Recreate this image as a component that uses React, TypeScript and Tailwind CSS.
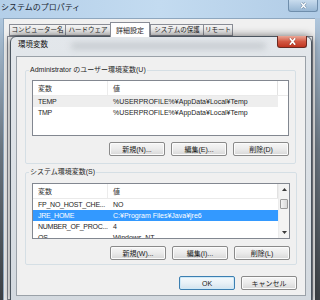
import React from "react";

function XIcon({ className }: { className?: string }) {
  return (
    <svg viewBox="0 0 10 8" className={className}>
      <path d="M2.5 1 L7.5 7 M7.5 1 L2.5 7" stroke="#4a2a24" strokeWidth="3" strokeLinecap="square" fill="none" opacity="0.35" />
      <path d="M2.5 1 L7.5 7 M7.5 1 L2.5 7" stroke="white" strokeWidth="1.8" strokeLinecap="square" fill="none" />
    </svg>
  );
}

function Btn({ label, def }: { label: string; def?: boolean }) {
  return (
    <div
      className={
        def
          ? "h-[14px] w-[56px] flex items-center justify-center rounded-[2px] border border-[#3c7fb1] bg-linear-to-b from-[#f4f9fc] via-[#e8f1f7] to-[#d3e3ee] shadow-[inset_0_0_0_1px_#cfe9f7] text-[7px] leading-none text-[#1a1a1a]"
          : "h-[14px] w-[56px] flex items-center justify-center rounded-[2px] border border-[#8a8a8a] bg-linear-to-b from-[#f6f6f6] via-[#ebebeb] to-[#d7d7d7] shadow-[inset_0_0_0_1px_#fbfbfb] text-[7px] leading-none text-[#1a1a1a]"
      }
    >
      {label}
    </div>
  );
}

type Row = [string, string];

function ListView({ rows, sel, dim, scroll }: { rows: Row[]; sel?: number; dim?: number; scroll?: boolean }) {
  return (
    <div className="h-[56px] border border-[#828790] bg-white flex overflow-hidden text-[7px] leading-[11px]">
      <div className="flex-1 flex flex-col min-w-0">
        <div className="h-[15px] shrink-0 flex border-b border-[#eaeaea] text-[#303030]">
          <div className="w-[75px] pl-[5px] flex items-center border-r border-[#ececec]">変数</div>
          <div className="w-[170px] pl-[5px] flex items-center border-r border-[#e2e2e2]">値</div>
          <div className="flex-1" />
        </div>
        {rows.map((r, i) => (
          <div
            key={i}
            className={
              i === sel
                ? "h-[11px] shrink-0 w-[245px] flex bg-[#3399ff] text-white"
                : i === dim
                ? "h-[11px] shrink-0 w-[245px] flex bg-[#eeeeee] text-[#1e1e1e]"
                : "h-[11px] shrink-0 w-[245px] flex text-[#1e1e1e]"
            }
          >
            <div className="w-[75px] pl-[5px] flex items-center whitespace-nowrap tracking-[-0.25px]">{r[0]}</div>
            <div className="w-[170px] pl-[5px] flex items-center whitespace-nowrap overflow-hidden">{r[1]}</div>
          </div>
        ))}
      </div>
      {scroll && (
        <div className="w-[11px] shrink-0 flex flex-col bg-[#f3f3f3] border-l border-[#ececec]">
          <div className="h-[11px] flex items-center justify-center">
            <svg width="5" height="3" viewBox="0 0 5 3">
              <path d="M0 3 L2.5 0 L5 3Z" fill="#3a3a3a" />
            </svg>
          </div>
          <div className="h-[4px]" />
          <div className="h-[10px] mx-[1px] rounded-[1px] border border-[#9a9a9a] bg-linear-to-r from-[#f4f4f4] to-[#d9d9d9]" />
          <div className="flex-1" />
          <div className="h-[11px] flex items-center justify-center">
            <svg width="5" height="3" viewBox="0 0 5 3">
              <path d="M0 0 L2.5 3 L5 0Z" fill="#3a3a3a" />
            </svg>
          </div>
        </div>
      )}
    </div>
  );
}

const tabs: { label: string; w: string; sel?: boolean }[] = [
  { label: "コンピューター名", w: "w-[56px]" },
  { label: "ハードウェア", w: "w-[45px]" },
  { label: "詳細設定", w: "w-[40px]", sel: true },
  { label: "システムの保護", w: "w-[53px]" },
  { label: "リモート", w: "w-[30px]" },
];

export default function App() {
  return (
    <div className="relative w-[320px] h-[300px] overflow-hidden bg-linear-to-b from-[#b9d2ea] via-[#6a7580] to-[#3d4145] font-['Liberation_Sans','Noto_Sans_CJK_JP',sans-serif] text-[#1e1e1e]">
      {/* outer window */}
      <div className="absolute inset-0 flex flex-col">
        <div className="h-[18px] shrink-0 flex items-start justify-between bg-linear-to-r from-[#b4cfe9] via-[#c3dbf0] to-[#b1cce6]">
          <div className="pl-[1px] pt-[2px] text-[8px] leading-[11px] text-[#1a2633]">システムのプロパティ</div>
          <div className="mr-[2px] w-[30px] h-[12px] rounded-b-[3px] border border-t-0 border-[#6f8eac] bg-linear-to-b from-[#c9dcee] to-[#98b7d4] flex items-center justify-center">
            <svg viewBox="0 0 10 8" className="w-[9px] h-[7px]">
              <path d="M2.5 1 L7.5 7 M7.5 1 L2.5 7" stroke="#34506c" strokeWidth="3" fill="none" opacity="0.4" />
              <path d="M2.5 1 L7.5 7 M7.5 1 L2.5 7" stroke="white" strokeWidth="1.6" fill="none" />
            </svg>
          </div>
        </div>
        <div className="flex-1 ml-[3px] mr-[5px] flex flex-col bg-[#f0f0f0] border-t border-l border-[#8ea7bf]">
          <div className="h-[17px] shrink-0 flex items-end pl-[5px]">
            {tabs.map((t) => (
              <div
                key={t.label}
                className={
                  t.sel
                    ? `${t.w} h-[15px] -mb-px relative z-10 flex items-center justify-center border border-b-0 border-[#898c95] bg-white text-[7px] leading-none whitespace-nowrap`
                    : `${t.w} h-[12px] flex items-center justify-center border border-r-0 last:border-r border-[#898c95] bg-linear-to-b from-[#f3f3f3] to-[#e1e1e1] text-[6.5px] leading-none whitespace-nowrap`
                }
              >
                {t.label}
              </div>
            ))}
          </div>
          <div className="flex-1 ml-[3px] mr-[2px] bg-white border border-[#898c95]" />
        </div>
      </div>

      {/* environment variables dialog */}
      <div className="absolute left-[10px] top-[36px] w-[302px] h-[266px] flex flex-col rounded-t-[6px] border border-[#4a545e] bg-linear-to-b from-[#e3e7eb] to-[#d3d9df] shadow-[0_0_8px_rgba(0,0,0,0.55)]">
        <div className="relative h-[19px] shrink-0 pl-[7px] pt-[3px]">
          <div className="absolute left-[60px] right-[45px] top-[6px] h-[6px] rounded-full bg-[#c3c8cd] blur-[3px]" />
          <div className="relative text-[7.5px] leading-[10px] text-[#111]">環境変数</div>
          <div className="absolute right-[4px] -top-px w-[30px] h-[12px] rounded-b-[3px] border border-t-0 border-[#6b2a22] bg-linear-to-b from-[#e9a797] via-[#d35843] to-[#c0341f] flex items-center justify-center">
            <XIcon className="w-[9px] h-[7px]" />
          </div>
        </div>
        <div className="flex-1 mx-[5px] mb-[5px] flex flex-col bg-[#f0f0f0] border border-[#9aa1a8] pt-[8px] pl-[8px] pr-[8px]">
          <fieldset className="mr-[1px] border border-[#d5dfe5] rounded-[2px] px-[6px] pb-[7px]">
            <legend className="-ml-[3px] px-[1px] text-[7px] leading-[10px]">Administrator のユーザー環境変数(U)</legend>
            <div className="mt-[5px]">
              <ListView
                rows={[
                  ["TEMP", "%USERPROFILE%¥AppData¥Local¥Temp"],
                  ["TMP", "%USERPROFILE%¥AppData¥Local¥Temp"],
                ]}
                dim={0}
              />
            </div>
            <div className="mt-[6px] flex justify-end gap-[6px]">
              <Btn label="新規(N)..." />
              <Btn label="編集(E)..." />
              <Btn label="削除(D)" />
            </div>
          </fieldset>
          <fieldset className="mt-[3px] mr-[1px] border border-[#d5dfe5] rounded-[2px] px-[6px] pb-[4px]">
            <legend className="-ml-[3px] px-[1px] text-[7px] leading-[10px]">システム環境変数(S)</legend>
            <div className="mt-[6px]">
              <ListView
                rows={[
                  ["FP_NO_HOST_CHE...", "NO"],
                  ["JRE_HOME", "C:¥Program Files¥Java¥jre6"],
                  ["NUMBER_OF_PROC...", "4"],
                  ["OS", "Windows_NT"],
                ]}
                sel={1}
                scroll
              />
            </div>
            <div className="mt-[7px] flex justify-end gap-[6px]">
              <Btn label="新規(W)..." />
              <Btn label="編集(I)..." />
              <Btn label="削除(L)" />
            </div>
          </fieldset>
          <div className="mt-[11px] flex justify-end gap-[6px]">
            <Btn label="OK" def />
            <Btn label="キャンセル" />
          </div>
        </div>
      </div>
    </div>
  );
}
